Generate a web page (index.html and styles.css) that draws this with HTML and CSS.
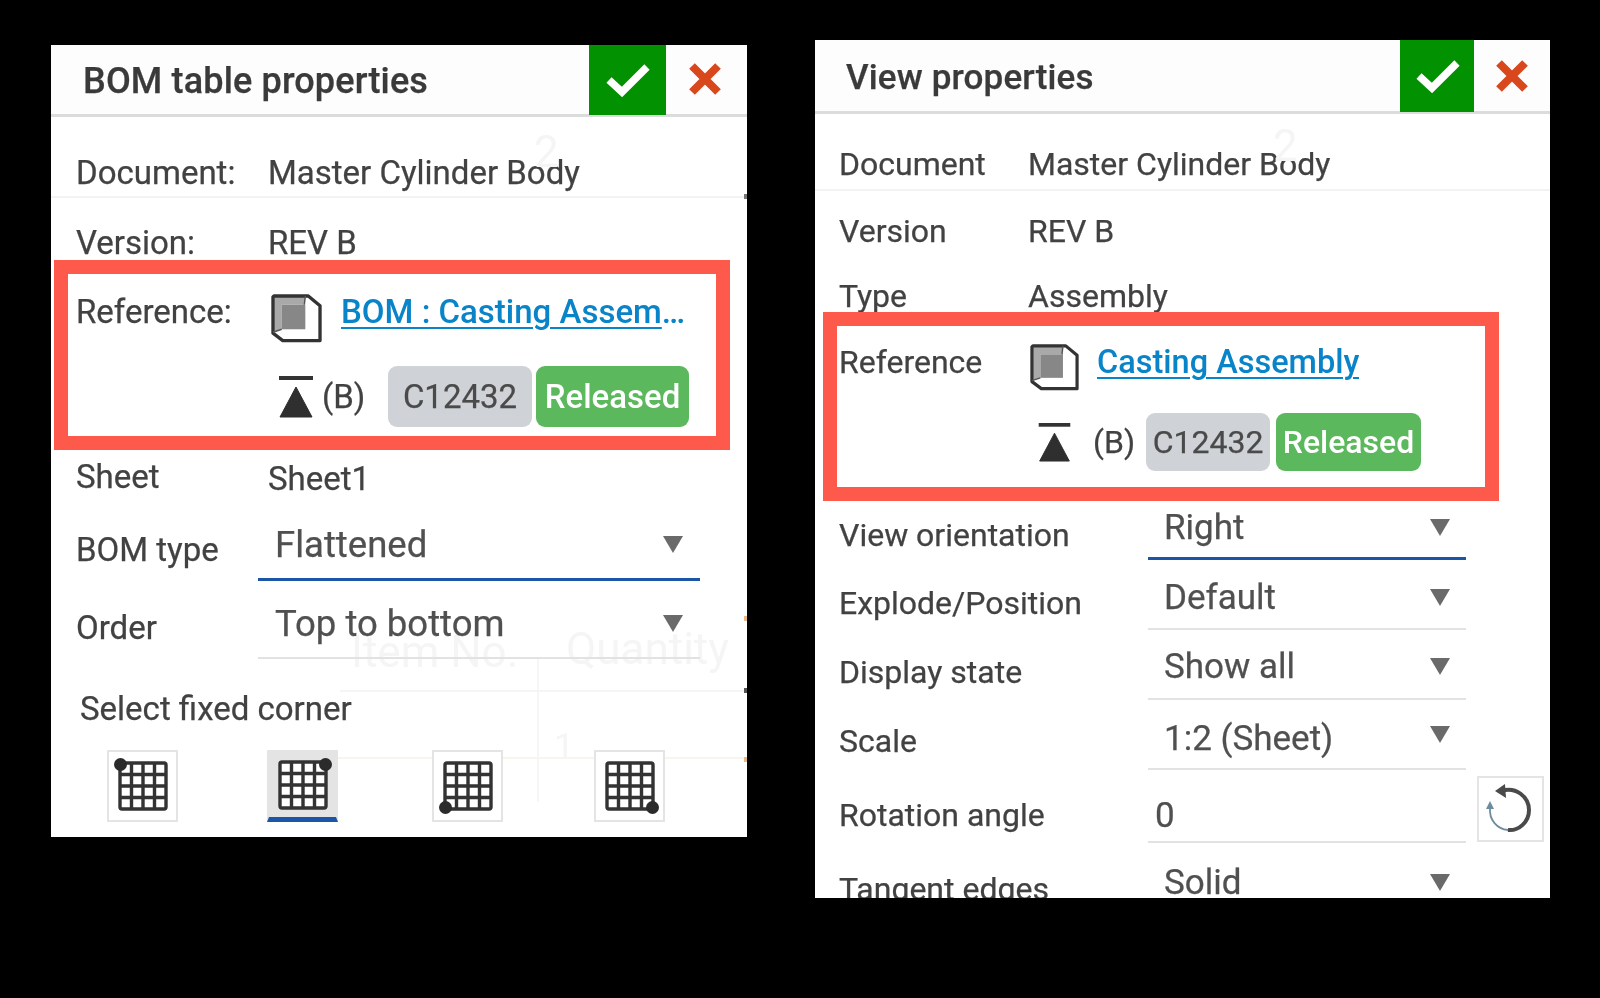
FILE: index.html
```html
<!DOCTYPE html>
<html lang="en">
<head>
<meta charset="utf-8">
<title>Properties panels</title>
<link rel="stylesheet" href="styles.css">
</head>
<body>
<svg class="defs" width="0" height="0" aria-hidden="true">
  <symbol id="cube" viewBox="0 0 52 50">
    <path d="M2 2H38L50 12V48H12L2 40Z" fill="#fff"/>
    <path d="M2 2H35L34 11H11V36L2 39Z" fill="#a9a9a9"/>
    <rect x="11" y="11" width="24" height="25" fill="#878787"/>
    <path d="M3 2H38L50 12V47.500H12L2 40V3Z" fill="none" stroke="#333" stroke-width="3.400" stroke-linejoin="round"/>
    <path d="M2 39L11 36M35 2L34 11" stroke="#555" stroke-width="1.500"/>
  </symbol>
  <symbol id="rev" viewBox="0 0 34 42">
    <rect x="0" y="0" width="34" height="4" fill="#333"/>
    <path d="M17 11L33 41H1Z" fill="#2f2f2f" stroke="#2f2f2f" stroke-linejoin="round"/>
  </symbol>
  <symbol id="check" viewBox="0 0 46 34">
    <path d="M4 17L17 29L42 4" fill="none" stroke="#fff" stroke-width="7.500"/>
  </symbol>
  <symbol id="cross" viewBox="0 0 34 34">
    <path d="M4 4L30 30M30 4L4 30" fill="none" stroke="#d9481c" stroke-width="8"/>
  </symbol>
  <symbol id="grid" viewBox="0 0 60 60">
    <rect x="7" y="7" width="46" height="46" rx="2" fill="#fff" stroke="#333" stroke-width="3.400"/>
    <path d="M18.500 7V53M30 7V53M41.500 7V53M7 18.500H53M7 30H53M7 41.500H53" stroke="#333" stroke-width="3.400"/>
  </symbol>
  <symbol id="reset" viewBox="0 0 50 52">
    <path d="M17 8C32 3 45 14 45 27C45 39 35 48 24 47" fill="none" stroke="#4a4a4a" stroke-width="4"/>
    <path d="M24 47C13 46 5 37 6 25" fill="none" stroke="#6d8ca0" stroke-width="1.800"/>
    <path d="M21 1L11 8L22 15Z" fill="#4a4a4a"/>
    <path d="M6 18L2 26H10Z" fill="#6d8ca0"/>
  </symbol>
</svg>

<main class="desk">
  <section class="panel bom">
    <div class="ghost g-two">2</div>
    <div class="ghost g-item">Item No.</div>
    <div class="ghost g-qty">Quantity</div>
    <div class="ghost g-one">1</div>
    <div class="ghost g-vline"></div>
    <div class="ghost g-hline"></div>
    <div class="ghost g-bline"></div>
    <div class="tick t1"></div>
    <div class="tick t2"></div>
    <div class="tick t3"></div>
    <div class="tick t4"></div>

    <header class="head">
      <h2 class="title">BOM table properties</h2>
      <button class="ok"><svg class="ic-check"><use href="#check"/></svg></button>
      <button class="no"><svg class="ic-cross"><use href="#cross"/></svg></button>
    </header>

    <div class="row doc"><span class="lab">Document:</span><span class="val">Master Cylinder Body</span></div>
    <div class="row ver"><span class="lab">Version:</span><span class="val">REV B</span></div>
    <div class="row ref">
      <span class="lab">Reference:</span>
      <svg class="ic-cube"><use href="#cube"/></svg>
      <a class="link" href="#">BOM : Casting Assembly</a>
    </div>
    <div class="row badges">
      <svg class="ic-rev"><use href="#rev"/></svg>
      <span class="rev">(B)</span>
      <span class="tag part">C12432</span>
      <span class="tag ok-tag">Released</span>
    </div>
    <div class="row sheet"><span class="lab">Sheet</span><span class="val low">Sheet1</span></div>

    <div class="field f-type">
      <span class="lab">BOM type</span>
      <div class="select focus"><span>Flattened</span><i class="arrow"></i></div>
    </div>
    <div class="field f-order">
      <span class="lab">Order</span>
      <div class="select"><span>Top to bottom</span><i class="arrow"></i></div>
    </div>

    <div class="row corner-label"><span>Select fixed corner</span></div>
    <div class="corners">
      <button class="corner"><svg class="ic-grid"><use href="#grid"/></svg><b class="dot tl"></b></button>
      <button class="corner on"><svg class="ic-grid"><use href="#grid"/></svg><b class="dot tr"></b></button>
      <button class="corner"><svg class="ic-grid"><use href="#grid"/></svg><b class="dot bl"></b></button>
      <button class="corner"><svg class="ic-grid"><use href="#grid"/></svg><b class="dot br"></b></button>
    </div>
    <div class="mark"></div>
  </section>

  <section class="panel view">
    <div class="ghost g-two">2</div>
    <header class="head">
      <h2 class="title">View properties</h2>
      <button class="ok"><svg class="ic-check"><use href="#check"/></svg></button>
      <button class="no"><svg class="ic-cross"><use href="#cross"/></svg></button>
    </header>

    <div class="row doc"><span class="lab">Document</span><span class="val">Master Cylinder Body</span></div>
    <div class="row ver"><span class="lab">Version</span><span class="val">REV B</span></div>
    <div class="row type"><span class="lab">Type</span><span class="val">Assembly</span></div>
    <div class="row ref">
      <span class="lab">Reference</span>
      <svg class="ic-cube"><use href="#cube"/></svg>
      <a class="link" href="#">Casting Assembly</a>
    </div>
    <div class="row badges">
      <svg class="ic-rev"><use href="#rev"/></svg>
      <span class="rev">(B)</span>
      <span class="tag part">C12432</span>
      <span class="tag ok-tag">Released</span>
    </div>

    <div class="field first">
      <span class="lab">View orientation</span>
      <div class="select focus"><span>Right</span><i class="arrow"></i></div>
    </div>
    <div class="field f2">
      <span class="lab">Explode/Position</span>
      <div class="select"><span>Default</span><i class="arrow"></i></div>
    </div>
    <div class="field f3">
      <span class="lab">Display state</span>
      <div class="select"><span>Show all</span><i class="arrow"></i></div>
    </div>
    <div class="field f4">
      <span class="lab">Scale</span>
      <div class="select"><span>1:2 (Sheet)</span><i class="arrow"></i></div>
    </div>
    <div class="field rot">
      <span class="lab">Rotation angle</span>
      <div class="select num"><span>0</span></div>
      <button class="reset"><svg class="ic-reset"><use href="#reset"/></svg></button>
    </div>
    <div class="field last">
      <span class="lab">Tangent edges</span>
      <div class="select"><span>Solid</span><i class="arrow"></i></div>
    </div>
    <div class="mark"></div>
  </section>
</main>
</body>
</html>
```

FILE: styles.css
```css
* { box-sizing: border-box; }
html, body { margin: 0; height: 100%; background: #000; }
body { font-family: Roboto, "Liberation Sans", sans-serif; color: #424242; overflow: hidden; }
.defs { position: absolute; }

.desk { display: flex; align-items: flex-start; gap: 68px; padding: 40px 0 0 51px; }

.panel { position: relative; background: #fff; overflow: hidden; flex: none; filter: blur(.7px); -webkit-text-stroke: .25px; }
.bom { width: 696px; height: 792px; margin-top: 5px; font-size: 33px; }
.view { width: 735px; height: 858px; font-size: 32px; }

/* header */
.head { display: flex; align-items: stretch; background: #fdfdfd; border-bottom: 3px solid #dcdcdc; position: relative; }
.bom .head { height: 72px; }
.view .head { height: 74px; }
.title { margin: 0; flex: 1; font-weight: 500; color: #3a3a3a; align-self: center; white-space: nowrap; }
.bom .title { font-size: 36px; letter-spacing: .15px; padding-left: 32px; padding-top: 2px; }
.view .title { font-size: 35px; letter-spacing: .15px; padding-left: 31px; padding-top: 4px; }
button { border: 0; padding: 0; margin: 0; background: none; font: inherit; }
.ok { background: #019101; display: flex; align-items: center; justify-content: center; }
.no { display: flex; align-items: center; justify-content: center; }
.bom .ok { width: 77px; margin-bottom: -1px; }
.bom .no { width: 81px; padding: 0 4px 2px 0; }
.view .ok { width: 74px; margin-bottom: -1px; padding-left: 2px; }
.view .no { width: 76px; }
.ic-check { width: 46px; height: 34px; }
.ic-cross { width: 34px; height: 34px; }

/* rows */
.row { display: flex; line-height: 40px; white-space: nowrap; }
.lab { flex: none; }
.val { flex: none; }
.bom .row { padding-left: 25px; }
.view .row { padding-left: 24px; }
.bom .row > .lab { width: 192px; }
.view .row > .lab { width: 189px; }

.bom .doc { margin-top: 36px; padding-bottom: 3px; border-bottom: 2px solid #f3f3f3; }
.bom .ver { margin-top: 25px; }
.bom .ref { margin-top: 29px; height: 52px; }
.bom .badges { margin-top: 22px; height: 61px; padding-left: 228px; align-items: center; }
.bom .sheet { margin-top: 30px; }
.low { margin-top: 2px; }

.view .doc { margin-top: 30px; padding-bottom: 5px; border-bottom: 2px solid #f3f3f3; }
.view .ver { margin-top: 20px; }
.view .type { margin-top: 25px; }
.view .ref { margin-top: 26px; height: 50px; }
.view .badges { margin-top: 21px; height: 58px; padding-left: 223px; align-items: center; }

.ic-cube { flex: none; margin-top: 2px; margin-right: 19px; margin-left: 3px; width: 51px; height: 49px; }
.view .ic-cube { width: 49px; height: 47px; margin-left: 2px; margin-right: 18px; }
.link { color: #0a84c9; font-weight: 500; -webkit-text-stroke: 0; text-decoration: underline; text-underline-offset: 4px; text-decoration-thickness: 2px; overflow: hidden; text-overflow: ellipsis; }
.bom .link { width: 348px; }
.view .link { font-size: 32.500px; }

.ic-rev { flex: none; width: 34px; height: 42px; }
.view .ic-rev { width: 33px; height: 39px; }
.rev { margin-left: 9px; width: 66px; }
.view .rev { margin-left: 22px; width: 53px; }
.tag { height: 100%; display: flex; align-items: center; justify-content: center; border-radius: 9px; flex: none; }
.part { background: #cfd2d6; color: #4a4a4a; width: 144px; margin-right: 4px; }
.ok-tag { background: #5cb85c; color: #fff; font-weight: 500; -webkit-text-stroke: 0; width: 153px; }
.view .part { width: 124px; margin-right: 6px; }
.view .ok-tag { width: 145px; }

/* fields */
.field { display: flex; }
.select { position: relative; display: flex; align-items: center; justify-content: space-between; border-bottom: 2px solid #e2e2e2; color: #505050; white-space: nowrap; }
.select.focus { border-bottom: 3px solid #1b56a6; }
.arrow { flex: none; width: 0; height: 0; border-left: 10px solid transparent; border-right: 10px solid transparent; border-top: 17px solid #6a6a6a; }

.bom .field { padding-left: 25px; height: 58px; }
.bom .field .lab { width: 182px; margin-top: 7px; line-height: 40px; }
.bom .select { width: 442px; padding: 0 17px 11px; font-size: 36.500px; }
.bom .select.focus { padding-bottom: 12px; }
.f-type { margin-top: 24px; }
.f-order { margin-top: 20px; }
.bom .corner-label { margin-top: 30px; padding-left: 29px; }

.corners { display: grid; grid-template-columns: 160px 165px 162px 71px; margin: 21px 0 0 56px; }
.corner { position: relative; width: 71px; height: 72px; border: 2px solid #e4e4e4; display: flex; align-items: center; justify-content: center; background: #fff; }
.corner.on { background: #e4e4e4; border-bottom: 5px solid #1b56a6; border-left-color: #e4e4e4; }
.ic-grid { width: 60px; height: 60px; }
.dot { position: absolute; width: 13px; height: 13px; border-radius: 50%; background: #2b2b2b; }
.tl { left: 5px; top: 6px; }
.tr { right: 4px; top: 6px; }
.bl { left: 5px; bottom: 6px; }
.br { right: 4px; bottom: 6px; }

.view .field { padding-left: 24px; height: 52px; margin-top: 18px; }
.view .field.first { margin-top: 37px; }
.view .field .lab { width: 309px; margin-top: 7px; line-height: 40px; }
.view .select { width: 318px; padding: 0 16px 9px; font-size: 35px; }
.view .select.focus { padding-bottom: 10px; }
.view .f2 .lab { margin-top: 5px; }
.view .f3 .lab { margin-top: 4px; }
.view .f3 .select { padding-bottom: 13px; }
.view .f4 .lab { margin-top: 3px; }
.view .f4 .arrow { margin-bottom: 8px; }
.view .f2 .select { padding-bottom: 11px; }
.view .num { padding-left: 7px; padding-bottom: 2px; }
.view .rot { margin-top: 21px; }
.view .rot .lab { margin-top: 4px; }
.view .last { margin-top: 19px; }
.reset { flex: none; align-self: flex-end; width: 67px; height: 66px; margin-left: 11px; margin-bottom: 1px; border: 2px solid #e4e4e4; display: flex; align-items: center; justify-content: center; padding-right: 4px; }
.ic-reset { width: 50px; height: 52px; }

/* red highlight, laid over the panel */
.mark { position: absolute; border: 14px solid #fd5a4b; pointer-events: none; }
.bom .mark { left: 3px; top: 215px; width: 676px; height: 190px; }
.view .mark { left: 8px; top: 272px; width: 676px; height: 189px; }

/* faint traces of the drawing behind the panel */
.ghost { position: absolute; color: #f5f5f5; font-size: 44px; line-height: 44px; -webkit-text-stroke: 0; }
.bom .g-two { left: 483px; top: 85px; }
.view .g-two { left: 458px; top: 84px; }
.g-item { left: 300px; top: 585px; }
.g-qty { left: 515px; top: 582px; }
.g-one { left: 503px; top: 680px; font-size: 36px; }
.g-vline { left: 486px; top: 612px; width: 2px; height: 145px; background: #f6f6f6; }
.g-hline { left: 289px; top: 645px; width: 407px; height: 2px; background: #f5f5f5; }
.g-bline { left: 268px; top: 712px; width: 428px; height: 2px; background: #faf5ec; }
.tick { position: absolute; right: 0; width: 3px; height: 5px; }
.t1 { top: 149px; background: #777; }
.t2 { top: 571px; background: #e9b98b; }
.t3 { top: 643px; background: #555; }
.t4 { top: 712px; background: #e9b98b; }
```
